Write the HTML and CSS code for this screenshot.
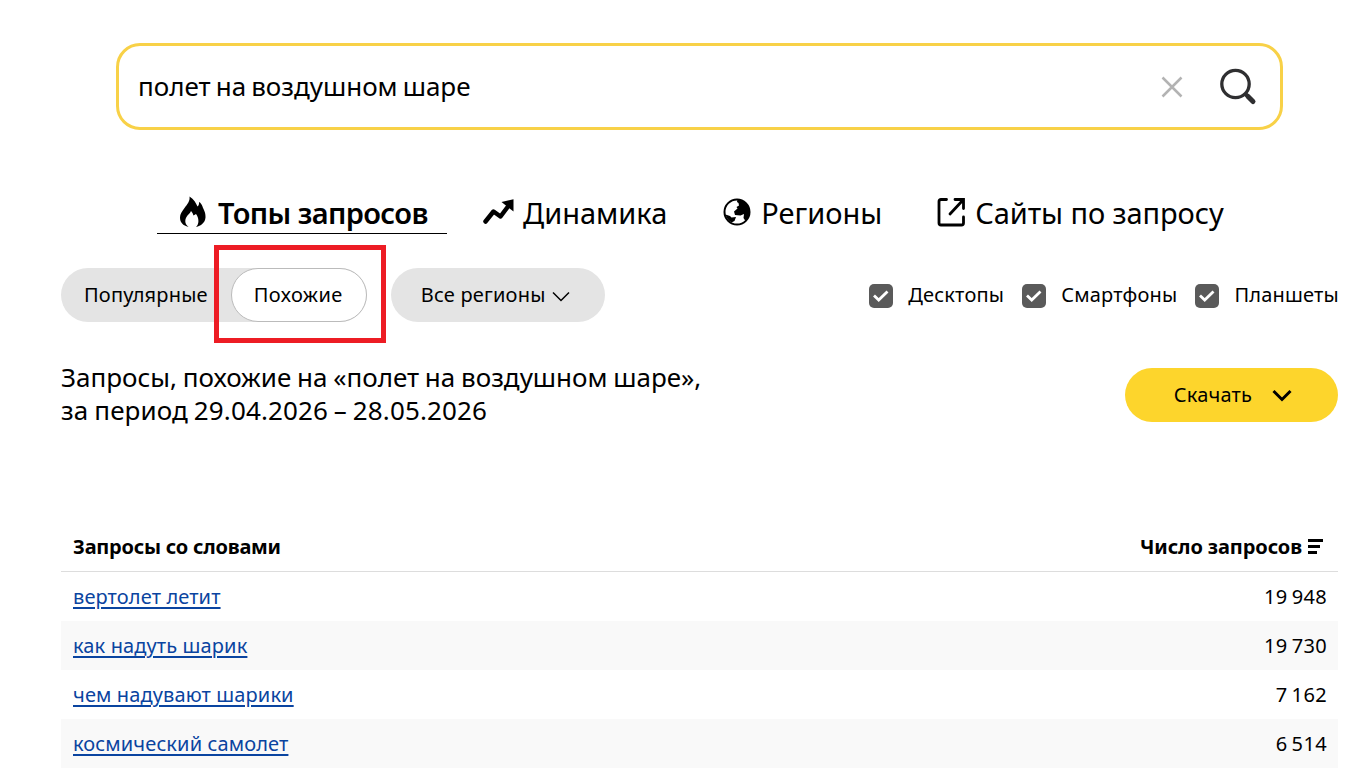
FILE: index.html
```html
<!DOCTYPE html>
<html lang="ru">
  <head>
    <meta charset="UTF-8" />
    <meta name="viewport" content="width=device-width, initial-scale=1.0" />
    <title>Топы запросов</title>
    <link rel="stylesheet" href="styles.css">
  </head>
  <body>
    <form class="search">
      <span class="search-text">полет на воздушном шаре</span>
      <svg class="search-clear" width="22" height="22" viewBox="0 0 22 22"><path d="M1.500 1.500l19 19M20.500 1.500l-19 19" /></svg>
      <svg class="search-icon" width="38" height="38" viewBox="0 0 38 38"><circle cx="16.500" cy="16" r="13.700" /><path class="handle" d="M26 25.500l3 3" /><path class="handle handle-end" d="M29 28.500l5 5" /></svg>
    </form>

    <nav class="tabs">
      <a class="tab tab-active">
        <svg width="28" height="32" viewBox="0 0 28 32"><path d="M10.500 .5c.7 4.500-2 7.500-5 11.500-2.500 3.500-4.500 6-4.500 9.500C1 26.500 4 29.500 9.500 31c-3.500-3-4-6.500-2-10 1.500-2.500 3.500-3.500 4.500-6 1.500 1.500 2 3 2.500 4.500l2.500-1.500C20 22 20.500 28 17 31c5-1.200 9-4 9.500-9.500.3-5-2-8-3-11-.8-2-1.500-3.500-3.500-4.500 .2 2-.3 3.500-1.500 4.500C17 7 15 3.500 10.500 .5z" /></svg>
        <span>Топы запросов</span>
      </a>
      <a class="tab tab-dynamics">
        <svg width="32" height="28" viewBox="0 0 32 28"><path class="line" d="M2.500 23.500l8-10 7 5 7.500-10" /><path d="M18.500 4l12-2.800V13.500z" /></svg>
        <span>Динамика</span>
      </a>
      <a class="tab tab-regions">
        <svg width="28" height="28" viewBox="0 0 28 28"><circle class="ring" cx="14" cy="14" r="12.500" /><path d="M14.500 1.500c6.500 0 12 5.500 12 12.500 0 3.500-1.500 6.500-4 9l-2-3 .5-4-3.500 1.500-5.500-.5-1-3.500 3.500-3-1-1.500 2.500-1.500-.5-2.500-1.500-1z" /><path d="M2.500 16.500l4.500 1.500 1.500 1.500 4.500-.5-1.500 4-3 1.500C5.500 23 3.500 20 2.500 16.500z" /></svg>
        <span>Регионы</span>
      </a>
      <a class="tab tab-sites">
        <svg width="28" height="30" viewBox="0 0 28 30"><path class="thin" d="M9.500 2.500H4Q2 2.500 2 4.500V26q0 2 2 2h20.500q2 0 2-2v-6M18 2.500h8.500v9M26 3L13 17" /></svg>
        <span>Сайты по запросу</span>
      </a>
    </nav>

    <div class="filters">
      <div class="switch">
        <span class="switch-item"><span class="label">Популярные</span></span>
        <span class="switch-item switch-item-active"><span class="label">Похожие</span><span class="highlight"></span></span>
      </div>
      <button class="regions" type="button">
        <span class="label">Все регионы</span>
        <svg width="18" height="12" viewBox="0 0 18 12"><path d="M1 2.500l8 8 8-8" /></svg>
      </button>
      <div class="devices">
        <span class="device"><span class="check"><svg width="16" height="12" viewBox="0 0 16 12"><path d="M1 5.500l4.700 4.500L14.500 1.500" /></svg></span><span class="label">Десктопы</span></span>
        <span class="device"><span class="check"><svg width="16" height="12" viewBox="0 0 16 12"><path d="M1 5.500l4.700 4.500L14.500 1.500" /></svg></span><span class="label">Смартфоны</span></span>
        <span class="device"><span class="check"><svg width="16" height="12" viewBox="0 0 16 12"><path d="M1 5.500l4.700 4.500L14.500 1.500" /></svg></span><span class="label">Планшеты</span></span>
      </div>
    </div>

    <div class="summary">
      <h1>Запросы, похожие на «полет на воздушном шаре»,<br /><span class="period">за период 29.04.2026 – 28.05.2026</span></h1>
      <button class="download" type="button">
        <span class="label">Скачать</span>
        <svg width="20" height="13" viewBox="0 0 20 13"><path d="M1.500 2l8.500 8.500L18.500 2" /></svg>
      </button>
    </div>

    <table class="result">
      <thead>
        <tr>
          <th>Запросы со словами</th>
          <th class="count">Число запросов<svg width="15" height="15" viewBox="0 0 15 15"><path d="M0 1.500h15M0 7.500h12M0 13.500h9" /></svg></th>
        </tr>
      </thead>
      <tbody>
        <tr><td><a href="#">вертолет летит</a></td><td class="count">19 948</td></tr>
        <tr><td><a href="#">как надуть шарик</a></td><td class="count">19 730</td></tr>
        <tr><td><a href="#">чем надувают шарики</a></td><td class="count">7 162</td></tr>
        <tr><td><a href="#">космический самолет</a></td><td class="count">6 514</td></tr>
      </tbody>
    </table>
  </body>
</html>
```
FILE: styles.css
```css
body {
  font-family: "Noto Sans", sans-serif;
  font-size: 20px;
  margin: 0;
  padding: 43px 34px 0 61px;
  background-color: #fff;
  color: #000;
  overflow: hidden;
}

svg {
  flex: none;
  fill: none;
  stroke: #000;
}

button {
  font: inherit;
  color: inherit;
  border: none;
  cursor: pointer;
}

.label {
  padding-bottom: 2px;
  letter-spacing: 0.2px;
}

/* Поиск */
.search {
  display: flex;
  align-items: center;
  box-sizing: border-box;
  height: 87px;
  margin: 0 55px;
  padding: 0 23px 0 19px;
  border: 3px solid #f8d147;
  border-radius: 24px;
}

.search-text {
  flex: 1;
  padding-bottom: 2px;
  font-size: 26px;
  word-spacing: -1.7px;
}

.search-clear {
  margin-right: 36px;
  stroke: #b3b3b3;
  stroke-width: 2.5;
}

.search-icon {
  stroke: #2f2f31;
  stroke-width: 3.3;
}

.search-icon .handle {
  stroke-width: 4;
}

.search-icon .handle-end {
  stroke-width: 5;
  stroke-linecap: round;
}

/* Вкладки */
.tabs {
  display: flex;
  height: 41px;
  margin: 63px 0 0 96px;
  font-size: 29px;
}

.tab {
  display: flex;
  align-items: center;
  box-sizing: border-box;
  gap: 10px;
  padding-bottom: 3px;
}

.tab svg {
  fill: #000;
  stroke: none;
}

.tab .line,
.tab .ring,
.tab .thin {
  fill: none;
  stroke: #000;
}

.tab .line {
  stroke-width: 4.5;
  stroke-linecap: round;
  stroke-linejoin: round;
}

.tab .ring {
  stroke-width: 2;
}

.tab .thin {
  stroke-width: 2.8;
  stroke-linecap: round;
}

.tab-active {
  gap: 11px;
  width: 290px;
  padding: 0 0 2px 22px;
  border-bottom: 1px solid #000;
  font-weight: 600;
  letter-spacing: -0.6px;
  white-space: nowrap;
}

.tab-dynamics {
  gap: 8px;
  margin-left: 36px;
}

.tab-regions {
  gap: 10px;
  margin-left: 56px;
}

.tab-sites {
  margin-left: 55px;
  letter-spacing: -0.1px;
}

/* Фильтры */
.filters {
  display: flex;
  align-items: center;
  height: 54px;
  margin-top: 34px;
}

.switch {
  display: flex;
  height: 54px;
  border-radius: 27px;
  background-color: #e4e4e4;
}

.switch-item {
  display: flex;
  align-items: center;
  padding: 0 23px;
}

.switch-item-active {
  position: relative;
  box-sizing: border-box;
  width: 136px;
  padding-left: 22px;
  border: 1px solid #bbb;
  border-radius: 27px;
  background-color: #fff;
}

.switch-item-active .label {
  letter-spacing: 0.4px;
}

.highlight {
  position: absolute;
  inset: -24px -20px -22px -18px;
  border: 5px solid #ed1c24;
}

.regions {
  display: flex;
  align-items: center;
  gap: 6px;
  width: 214px;
  height: 54px;
  margin-left: 24px;
  padding: 0 0 0 30px;
  border-radius: 27px;
  background-color: #e4e4e4;
}

.regions svg {
  margin-top: 2px;
  stroke-width: 1.5;
}

.devices {
  display: flex;
  gap: 18px;
  margin: 0 -1px 0 auto;
}

.device {
  display: flex;
  align-items: center;
  gap: 15px;
}

.check {
  display: flex;
  align-items: center;
  justify-content: center;
  width: 24px;
  height: 24px;
  margin-top: 2px;
  border-radius: 5px;
  background-color: #5a5a5a;
}

.check svg {
  stroke: #fff;
  stroke-width: 2.8;
}

/* Заголовок и кнопка */
.summary {
  display: flex;
  justify-content: space-between;
  align-items: flex-start;
  height: 155px;
  margin-top: 39px;
}

h1 {
  margin: 0;
  font-size: 26px;
  font-weight: 400;
  line-height: 33px;
  word-spacing: -1px;
}

.period {
  letter-spacing: 0.12px;
}

.download {
  display: flex;
  align-items: center;
  justify-content: center;
  gap: 20px;
  width: 213px;
  height: 54px;
  margin-top: 7px;
  padding: 0 0 0 3px;
  border-radius: 27px;
  background-color: #fdd52c;
}

.download svg {
  stroke-width: 3;
}

/* Таблица */
.result {
  width: 100%;
  border-collapse: separate;
  border-spacing: 0;
}

th,
td {
  height: 49px;
  padding: 0 12px;
  text-align: left;
}

th {
  padding-top: 6px;
  border-bottom: 1px solid #ddd;
  letter-spacing: -0.23px;
}

th.count {
  letter-spacing: -0.1px;
}

th svg {
  margin: 0 3px 0 6px;
  stroke-width: 3;
}

td {
  letter-spacing: 0.12px;
}

.count {
  text-align: right;
}

td.count {
  padding-right: 11px;
  letter-spacing: 0.35px;
  word-spacing: -1.5px;
}

tbody tr:nth-child(even) {
  background-color: #f9f9f9;
}

td a {
  color: #0a44a0;
  text-decoration-thickness: 2px;
  text-underline-offset: 3px;
}
```
